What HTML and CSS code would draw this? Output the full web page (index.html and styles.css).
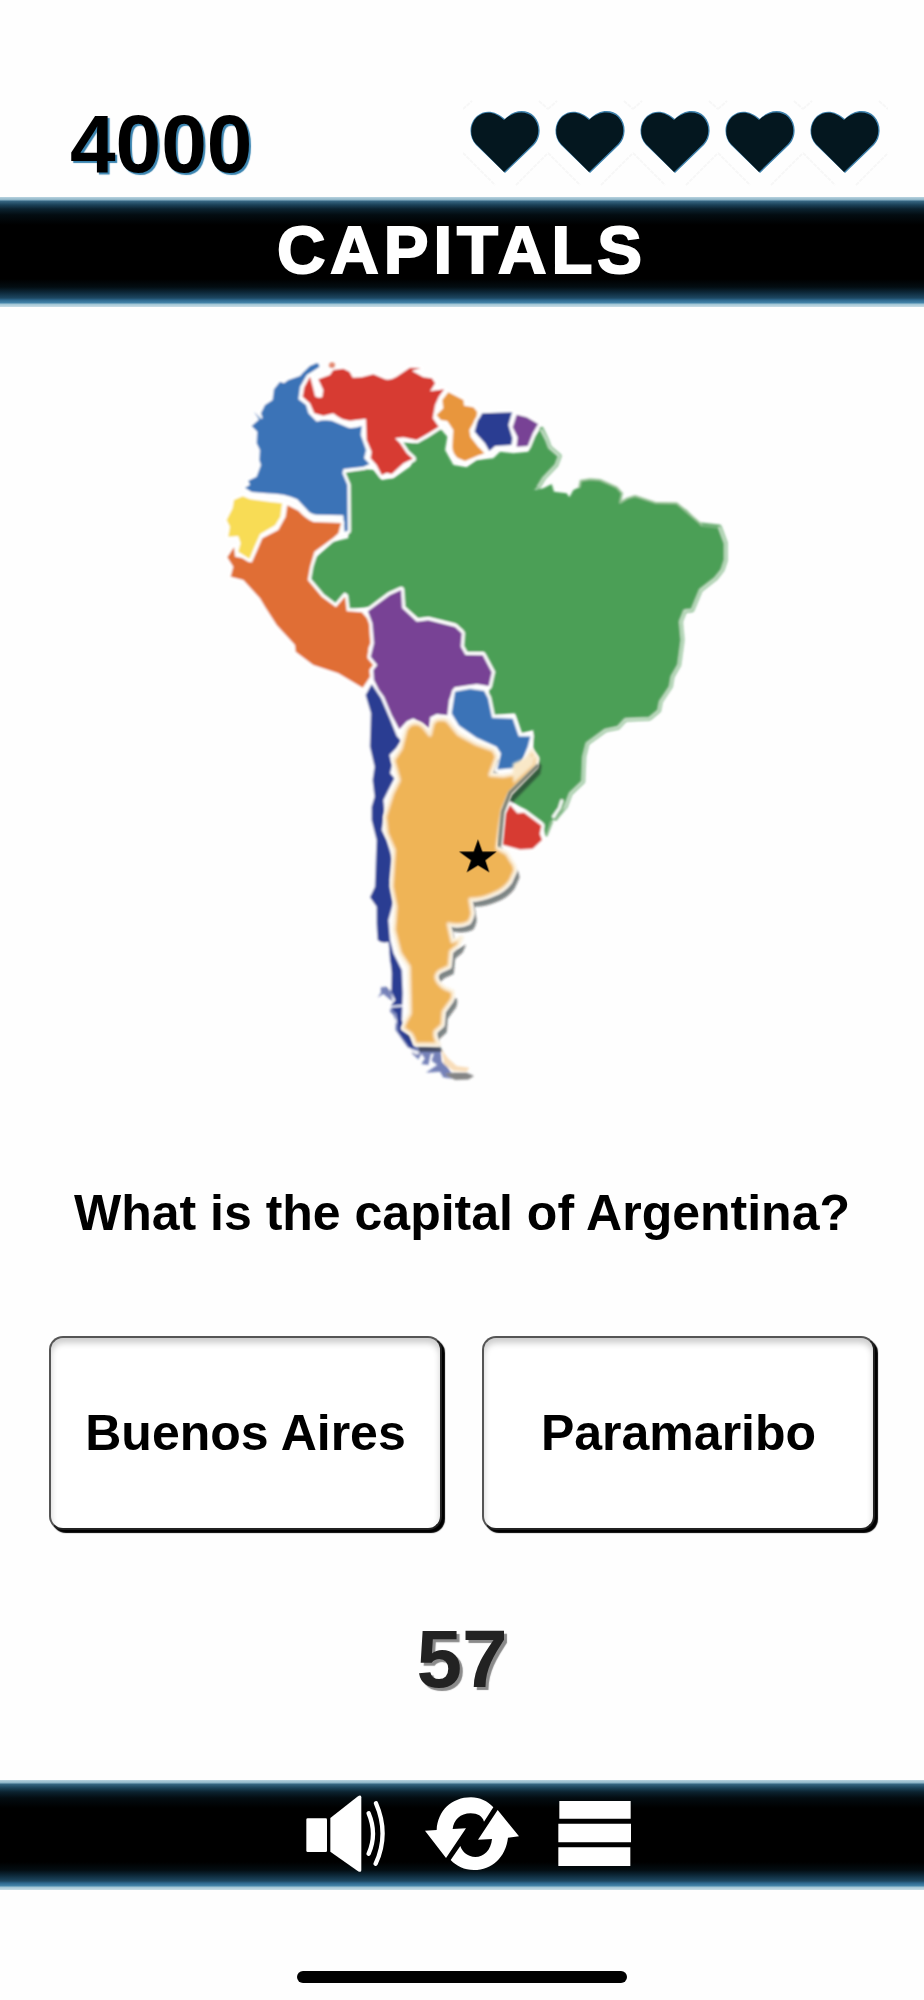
FILE: index.html
```html
<!DOCTYPE html>
<html lang="en">
<head>
<meta charset="utf-8">
<meta name="viewport" content="width=device-width, initial-scale=1">
<title>Capitals</title>
<link rel="stylesheet" href="styles.css">
</head>
<body>
<svg class="symbols" aria-hidden="true">
  <symbol id="heart" viewBox="0 0 85 86">
    <g fill="none" stroke="#f7f7f7" stroke-width="2" stroke-dasharray="4 1"><path d="M0 9L9 1M76 1L85 9M0 53L32 85M53 85L85 53"/></g>
    <path fill="#3f82ad" d="M42 73L13 45C5 36 6 23 14 16C22 9 33 11 42 19C51 9 64 9 71 16C79 24 78 38 71 45Z"/>
    <path fill="#04171f" d="M41 72L13 44C6 36 7 24 14 17C22 10 33 12 41 20C50 11 63 10 70 17C77 24 77 37 70 44Z"/>
  </symbol>
</svg>
<div class="game">
  <header class="status">
    <div class="score">4000</div>
    <div class="lives" role="img" aria-label="5 lives">
      <svg class="life"><use href="#heart"/></svg>
      <svg class="life"><use href="#heart"/></svg>
      <svg class="life"><use href="#heart"/></svg>
      <svg class="life"><use href="#heart"/></svg>
      <svg class="life"><use href="#heart"/></svg>
    </div>
  </header>
  <div class="bar title-bar"><h1 class="title">CAPITALS</h1></div>
  <main class="round">
    <svg class="map" viewBox="-60 0 1632 2250" role="img" aria-label="Map of South America">
      <defs>
        <filter id="soft" x="-5%" y="-5%" width="110%" height="110%"><feGaussianBlur stdDeviation="3"/></filter>
        <filter id="glow" x="-5%" y="-5%" width="110%" height="110%"><feGaussianBlur stdDeviation="5"/></filter>
        <path id="argentina" d="M585 1148Q590 1125 610 1120Q628 1116 640 1130L660 1155L668 1120Q678 1105 690 1108Q708 1105 715 1115L745 1152L800 1182L850 1200L860 1220L840 1275L880 1278L920 1270L965 1200L982 1225L978 1250L900 1330L878 1380L870 1430L862 1495L890 1510L905 1535Q915 1545 915 1562L900 1595Q880 1622 850 1632Q815 1648 780 1648L787 1690Q782 1712 775 1718Q750 1730 715 1722L727 1775L755 1762L745 1785L722 1805L718 1850L700 1858Q680 1865 678 1880Q680 1900 705 1915L728 1925Q730 1940 725 1950L700 1985L697 2025L675 2045Q672 2065 687 2083L615 2083Q612 2065 603 2052L578 2035Q585 2015 600 1990L597 1850L570 1810L552 1740L557 1670L545 1610L552 1500L530 1450L525 1400L547 1330L567 1290L550 1230L573 1195Z"/>
      </defs>
      <g filter="url(#soft)" stroke-linejoin="round" stroke-linecap="round">
        <path fill="#4b9f56" d="M993 232L1010 270L1018 292L1050 318L1038 345L1000 385L985 410L972 420L1000 415L1025 402L1032 425L1070 430L1078 442L1090 420L1108 412L1112 392L1140 388L1170 390L1220 412L1238 430L1230 458L1252 445L1275 438L1335 458L1400 460L1430 480L1475 525L1528 530L1546 580L1546 630L1536 660L1516 685L1471 720L1446 780L1424 782L1411 815L1416 870L1406 945L1386 980L1381 1010L1351 1055L1346 1082L1318 1105L1246 1108L1224 1132L1186 1140L1131 1180L1121 1220L1118 1295L1081 1330L1066 1370L1036 1405L1021 1415L1006 1458L995 1415L940 1375L895 1350L900 1300L970 1240L970 1140L935 1150L915 1090L850 1095L835 1030L855 965L822 905L770 905L755 880L760 840L735 820L655 800L625 805L585 770L580 715L540 725L480 770L415 778L405 725L375 765L335 730L303 690L305 660L320 620L370 575L415 565L420 450L400 420L415 400L395 370L470 358L490 360L515 390L550 385L600 350L612 328L560 275L610 280L650 265L690 235L712 260L705 300L730 345L770 352L800 330L850 325L870 305L910 310L955 305L975 260Z"/>
        <g fill="none">
          <path id="coast" stroke="#6fb077" stroke-width="13" d="M994 236L1010 270L1018 292L1048 318L1038 345L1000 385L985 410M1475 524L1528 530L1546 580L1546 630L1536 660L1516 685L1471 720L1446 780L1424 782L1411 815L1416 870L1406 945L1386 980L1381 1010L1351 1055L1346 1082L1318 1105L1246 1108L1224 1132L1186 1140L1131 1180L1121 1220L1118 1295L1081 1330L1066 1370L1036 1405"/>
          <path stroke="#e2f0e2" stroke-width="5" d="M994 240L1010 270L1018 292L1048 318L1038 345L1000 385L985 410M1528 532L1546 580L1546 630L1536 660L1516 685L1471 720L1446 780L1424 782L1411 815L1416 870L1406 945L1386 980L1381 1010L1351 1055L1346 1082L1318 1105L1246 1108L1224 1132L1186 1140L1131 1180L1121 1220L1118 1295L1081 1330L1066 1370L1036 1405"/>
          <path stroke="#9cc49a" stroke-width="6" d="M1108 412L1112 392L1140 388L1170 390L1220 412L1236 430L1230 458L1252 445L1275 438L1335 458L1400 460L1475 524"/>
          <path stroke="#84b887" stroke-width="8" d="M1056 1350Q1071 1360 1038 1408M1025 1415L1009 1456"/>
          <path stroke="#fff" stroke-width="9" d="M1055 1352L1048 1374L1030 1400"/>
        </g>

        <g stroke="#fff" stroke-width="20" paint-order="stroke">
          <path fill="#3a73b7" d="M325 40L300 48L270 78L235 90L222 100L210 95L192 118L188 150L165 165L153 190L158 205L148 208L125 228L142 245L140 280L150 300L148 330L153 345L140 380L115 392L120 405L105 413L125 426L170 430Q225 430 262 448L290 478Q302 494 320 494L400 496L404 545L413 542L412 405L397 370L400 357L460 350L478 342L462 325L468 300L452 255L455 228Q432 236 415 233L365 212Q340 208 320 215L295 190L288 165L265 148L270 110L290 75L328 50Z"/>
          <path fill="#d73a32" d="M300 80L283 112L278 140L300 160L313 190L340 197L370 190Q395 212 420 212L468 206L470 270L485 305L482 325L500 345L515 375L530 368L545 372L580 340L608 326L590 310L570 280L555 265L580 262L620 270L655 250L686 230L668 205L675 165L686 140L702 118L660 124L675 100L665 85L640 82L605 62L632 54L600 53L560 80Q540 92 525 88L490 73L455 82L428 83L418 65L400 56L370 60L360 75L325 88L340 120L337 142Q322 146 315 139L308 110Z"/>
          <path fill="#e8963c" d="M715 127L697 150L700 175L680 195L692 210L712 213L730 240L727 290Q728 310 742 323L765 333L800 318L823 310L800 285L781 260L778 240L800 200L801 185L790 172L762 167L760 150Z"/>
          <path fill="#2b3d92" d="M817 190L906 187L895 225L907 265L904 285L855 288L838 303L825 280L794 245L802 215Z"/>
          <path fill="#784395" d="M920 194L950 202L984 222L968 250L953 288L920 290L923 262L908 232Z"/>
          <path fill="#e06e36" d="M232 466L227 500L205 540L157 565L142 600L125 638L100 625L75 620L72 592L52 622L70 650L62 680L100 690L150 745L165 770L200 825L255 885L257 905L310 945L385 970L458 1013L480 980L478 960L490 945L473 925L475 895L481 880L478 812L455 787L410 784L405 740L378 772L335 740L293 690L300 650L313 605L370 563L385 550L393 519L310 516Q285 505 265 482Z"/>
          <path fill="#f8dc55" d="M98 439L72 450L68 475L50 510L60 530L55 560L85 558L92 580L85 605L118 626L133 590L150 552L195 526L211 500L216 460L180 456L120 448Z"/>
          <path fill="#784395" d="M474 784L540 735L573 720L576 774L620 815L655 811L735 831L755 850L752 890L766 915L818 916L845 967L836 1008L800 1002L733 1012L717 1050L712 1096L680 1092L660 1102L658 1135L610 1105L590 1114L568 1138L545 1095L522 1040L507 1020L492 990L490 960L502 945L482 920L492 880L487 820Z"/>
        </g>
        <path fill="#2b3d92" stroke="#fff" stroke-width="14" paint-order="stroke" d="M485 1003L513 1045L541 1110L560 1158L573 1172L558 1195L538 1215L546 1245L540 1270L553 1285L535 1320L520 1350L524 1390L515 1440L530 1470L548 1530L540 1590L550 1655L535 1710L540 1770L550 1810L575 1860L578 1930L575 2010L605 2070L620 2092L600 2095L565 2045L558 1990L540 1970L556 1950L544 1925L545 1870L536 1775Q515 1782 503 1770L500 1720L500 1670L480 1642L495 1610L500 1470L485 1410L485 1370L494 1340L488 1290L494 1250L480 1190L483 1090L467 1035Z"/>
        <path fill="#3a73b7" opacity=".75" d="M320 38L300 48L275 72L290 74L328 50ZM153 206L133 185L147 210Z"/>
        <circle cx="366" cy="46" r="9" fill="#e28770"/>
        <g fill="#2b3d92" opacity=".65">
          <path d="M545 1925L530 1910L512 1912L513 1928L503 1942L520 1932L548 1955ZM540 1975L558 1982L556 2040L595 2095L605 2085L560 2020L550 1995L540 1985ZM538 1800L562 1850L555 1860L540 1835ZM600 2090L606 2110L625 2128L634 2110L645 2125L634 2142L655 2145L662 2112L672 2110L665 2132L682 2145L648 2168L690 2165L700 2182L735 2187L712 2150L695 2135L692 2095L640 2088Z"/>
        </g>
        <path fill="#fff" d="M580 2090L628 2106L622 2113L578 2094ZM530 1968L580 1964L580 1970L530 1974Z"/>

        <use href="#argentina" transform="translate(13 22)" fill="#222b2b" opacity=".58"/>
        <path fill="#858585" d="M705 2172L730 2168L770 2168L792 2178L775 2188L735 2190Z"/>
        <path fill="#f8ddba" d="M695 2100L715 2125L740 2148L778 2153L770 2165L730 2163L702 2140Z"/>
        <g stroke="#fff" stroke-width="20" paint-order="stroke">
          <path fill="#3a73b7" d="M735 1025L780 1017L822 1023L834 1045L846 1104L908 1106L926 1159L961 1159L953 1190L928 1252L862 1258L873 1210L860 1190L800 1163L747 1126L725 1090Z"/>
          <path fill="#d73a32" d="M900 1365L922 1390L942 1388L994 1427L989 1452L996 1470L968 1496L930 1498L878 1484L887 1390Z"/>
        </g>
        <path d="M858 1215L864 1230L848 1268L835 1268Z" fill="#777"/>
        <use href="#argentina" fill="#fff" stroke="#fff" stroke-width="9"/>
      </g>
      <g filter="url(#glow)">
        <use href="#argentina" fill="#efb457" stroke="#fbeed6" stroke-width="10" stroke-linejoin="round"/>
        <path d="M908 1240L958 1218L975 1215L970 1245L910 1300Z" fill="#f9e8c8"/>
      </g>
      <path filter="url(#soft)" d="M985 1245L900 1328L878 1385L868 1490" fill="none" stroke="#535d54" stroke-width="10" opacity=".8"/>
      <path d="M804 1468L817 1505L860 1505L826 1531L838 1567L804 1546L770 1567L783 1531L747 1505L791 1505Z"/>
    </svg>
    <p class="question">What is the capital of Argentina?</p>
    <div class="answers">
      <button class="answer" type="button">Buenos Aires</button>
      <button class="answer" type="button">Paramaribo</button>
    </div>
    <div class="timer" role="timer">57</div>
  </main>
  <footer class="bar controls">
    <button class="control" type="button" aria-label="Sound">
      <svg class="icon icon-sound" viewBox="78 100 240 237" fill="#fff">
        <rect x="79" y="173" width="62" height="101" rx="4"/>
        <path d="M151 172L232 108Q244 100 244 110V328Q244 338 232 330L151 273Z"/>
        <path fill="none" stroke="#fff" stroke-width="13" stroke-linecap="round" d="M266 158Q292 220 266 279M288 128Q328 220 287 309"/>
      </svg>
    </button>
    <button class="control" type="button" aria-label="Restart">
      <svg class="icon icon-restart" viewBox="430 100 282 237" fill="#fff">
        <path d="M465 208C468 150 510 110 568 110C595 110 617 121 635 140L607 183C602 166 588 158 567 158C536 158 516 178 513 205L553 203L493 292L430 210Z"/>
        <path d="M648 148L712 227L679 231C672 290 631 328 577 328C548 328 524 316 507 298L536 256C542 275 559 288 581 289C606 289 628 269 631 235L589 237Z"/>
      </svg>
    </button>
    <button class="control" type="button" aria-label="Menu">
      <svg class="icon icon-menu" viewBox="834 100 219 237" fill="#fff">
        <path d="M838 121H1052V174H838ZM835 189H1053V245H835ZM835 260H1051V316H835Z"/>
      </svg>
    </button>
  </footer>
  <div class="home-indicator"></div>
</div>
</body>
</html>
```
FILE: styles.css
```css
* { box-sizing: border-box; }

body {
  margin: 0;
  background: #fefefe;
  color: #000;
  font-family: "Liberation Sans", Arial, sans-serif;
  font-weight: 700;
}

.symbols {
  position: absolute;
  width: 0;
  height: 0;
}

.game {
  display: flex;
  flex-direction: column;
  min-height: 100vh;
}

.status {
  display: flex;
  justify-content: space-between;
  align-items: center;
  padding: 100px 36px 11px 70px;
}

.score,
.timer {
  font-size: 82px;
  line-height: 88px;
}

.score {
  margin-bottom: -2px;
  text-shadow: 2px 2px 1px #3a84b0;
}

.lives { display: flex; }

.life {
  display: block;
  width: 85px;
  height: 86px;
}

.bar {
  display: flex;
  justify-content: center;
  align-items: center;
  height: 110px;
  background: linear-gradient(#b9d3df 0, #8ab2c5 3px, #376783 4px, #1a4056 8px, #0b222f 12px, #030c11 18px, #000 28px, #000 82px, #030d12 90px, #0c2636 95px, #1d4761 101px, #2d678d 103px, #4686ab 106px, #9fc4d4 107px, #c9dde6 110px);
}

.title-bar { padding-bottom: 4px; }

.title {
  margin: 0;
  color: #fff;
  font-size: 67px;
  line-height: 80px;
  letter-spacing: 5px;
  -webkit-text-stroke: 2px #fff;
}

.round {
  display: flex;
  flex-direction: column;
  padding-top: 43px;
}

.map {
  align-self: center;
  width: 100%;
  max-width: 544px;
}

.question {
  margin: 83px 24px 0;
  font-size: 50px;
  line-height: 60px;
  text-align: center;
}

.answers {
  display: grid;
  grid-template-columns: 1fr 1fr;
  gap: 40px;
  margin-top: 93px;
  padding: 0 49px;
}

.answer {
  min-height: 194px;
  padding: 0;
  border: 2px solid #555;
  border-right-color: #222;
  border-bottom-color: #222;
  border-radius: 14px;
  background: #fff;
  box-shadow: 3px 3px 1px #000, inset 0 5px 6px rgba(0, 0, 0, 0.2);
  color: #000;
  font: inherit;
  font-size: 50px;
  line-height: 60px;
}

.timer {
  margin: 85px 0 77px;
  color: #222;
  text-align: center;
  text-shadow: 3px 3px 1px #8a8a8a;
}

.controls {
  gap: 39px;
  padding: 0 0 4px 13px;
}

.control {
  padding: 0;
  border: 0;
  background: none;
}

.icon {
  display: block;
  height: 79px;
}

.icon-sound { width: 80px; }
.icon-restart { width: 94px; }
.icon-menu { width: 73px; }

.home-indicator {
  align-self: center;
  width: 330px;
  height: 12px;
  margin-top: 81px;
  border-radius: 6px;
  background: #000;
}
```
